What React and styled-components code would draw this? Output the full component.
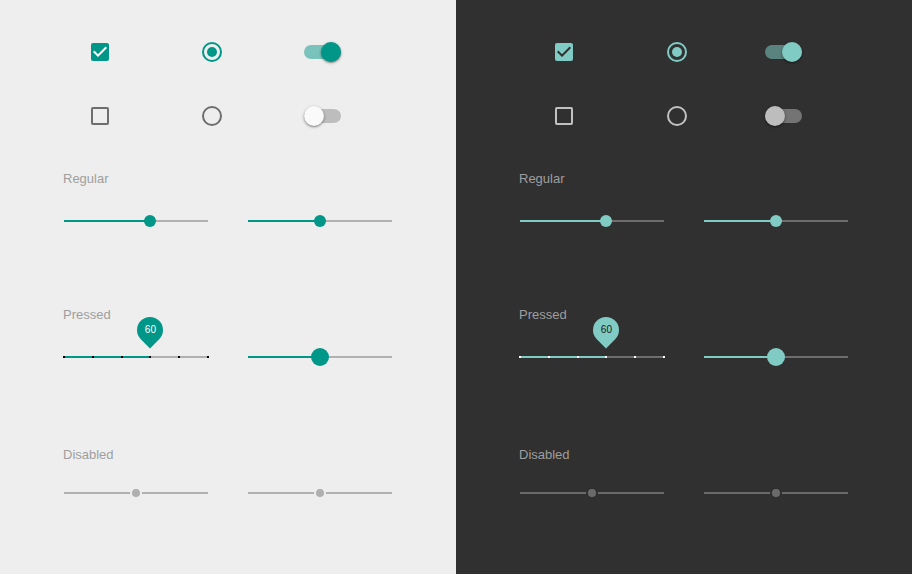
import React from 'react';
import styled, { createGlobalStyle } from 'styled-components';

const Global = createGlobalStyle`
  html, body { margin: 0; padding: 0; overflow: hidden; }
  body { font-family: "Liberation Sans", Arial, sans-serif; }
`;

const themes = {
  light: {
    bg: '#eeeeee', accent: '#009688', onAccent: '#ffffff', border: '#6e6e6e',
    label: '#9e9e9e', track: '#b0b0b0', tick: '#000000', switchOnTrack: '#7ac3bc',
    switchOffTrack: '#bdbdbd', switchOffThumb: '#fafafa', disabled: '#b0b0b0', pinText: '#ffffff',
  },
  dark: {
    bg: '#303030', accent: '#80cbc4', onAccent: '#303030', border: '#c1c1c1',
    label: '#9e9e9e', track: '#6e6e6e', tick: '#ffffff', switchOnTrack: '#5a837f',
    switchOffTrack: '#747474', switchOffThumb: '#bdbdbd', disabled: '#6a6a6a', pinText: '#1a1a1a',
  },
};

const Page = styled.div`
  display: flex;
  width: 912px;
  height: 574px;
`;

const Panel = styled.div`
  width: 456px;
  height: 574px;
  background: ${p => p.$t.bg};
  display: flex;
  flex-direction: column;
`;

const ControlGrid = styled.div`
  display: grid;
  grid-template-columns: ${p => p.$cols};
  grid-auto-rows: 20px;
  row-gap: 44px;
  align-items: center;
  padding: 42px 0 0 ${p => p.$pl}px;
`;

const CheckBox = styled.div`
  width: 18px;
  height: 18px;
  box-sizing: border-box;
  border-radius: 2px;
  display: flex;
  align-items: center;
  justify-content: center;
  background: ${p => (p.$on ? p.$t.accent : 'transparent')};
  border: ${p => (p.$on ? 'none' : `2px solid ${p.$t.border}`)};
  svg { display: block; }
`;

const Radio = styled.div`
  width: 20px;
  height: 20px;
  box-sizing: border-box;
  border-radius: 50%;
  border: 2px solid ${p => (p.$on ? p.$t.accent : p.$t.border)};
  display: flex;
  align-items: center;
  justify-content: center;
`;

const RadioDot = styled.div`
  width: 10px;
  height: 10px;
  border-radius: 50%;
  background: ${p => p.$t.accent};
`;

const SwitchBox = styled.div`
  position: relative;
  width: 37px;
  height: 20px;
`;

const SwitchTrack = styled.div`
  position: absolute;
  left: 0;
  right: 0;
  top: 3px;
  height: 14px;
  border-radius: 7px;
  background: ${p => (p.$on ? p.$t.switchOnTrack : p.$t.switchOffTrack)};
`;

const SwitchThumb = styled.div`
  position: absolute;
  top: 0;
  left: ${p => (p.$on ? 17 : 0)}px;
  width: 20px;
  height: 20px;
  border-radius: 50%;
  background: ${p => (p.$on ? p.$t.accent : p.$t.switchOffThumb)};
  box-shadow: 0 1px 3px rgba(0, 0, 0, 0.4), 0 1px 1px rgba(0, 0, 0, 0.14);
`;

const Section = styled.div`
  margin-top: ${p => p.$mt}px;
`;

const Label = styled.div`
  margin-left: 63px;
  margin-bottom: ${p => p.$mb}px;
  font-size: 13px;
  line-height: 16px;
  color: ${p => p.$t.label};
`;

const SliderRow = styled.div`
  display: flex;
  gap: 40px;
  padding-left: 64px;
`;

const SliderBox = styled.div`
  position: relative;
  width: 144px;
  height: 24px;
`;

const Track = styled.div`
  position: absolute;
  left: 0;
  right: 0;
  top: 11px;
  height: 2px;
  background: ${p => p.$c};
`;

const Fill = styled.div`
  position: absolute;
  left: 0;
  top: 11px;
  height: 2px;
  background: ${p => p.$c};
`;

const Tick = styled.div`
  position: absolute;
  top: 11px;
  width: 2px;
  height: 2px;
  margin-left: -1px;
  background: ${p => p.$c};
`;

const Thumb = styled.div`
  position: absolute;
  top: 12px;
  width: ${p => p.$size}px;
  height: ${p => p.$size}px;
  border-radius: 50%;
  background: ${p => p.$c};
  transform: translate(-50%, -50%);
  ${p => (p.$ring ? `box-shadow: 0 0 0 2px ${p.$ring};` : '')}
`;

const PinWrap = styled.div`
  position: absolute;
  top: -28.5px;
  width: 26px;
  height: 26px;
  margin-left: -13px;
  display: flex;
  align-items: center;
  justify-content: center;
`;

const PinShape = styled.div`
  position: absolute;
  inset: 0;
  border-radius: 50% 50% 50% 0;
  transform: rotate(-45deg);
  background: ${p => p.$c};
`;

const PinText = styled.span`
  position: relative;
  font-size: 10px;
  line-height: 10px;
  color: ${p => p.$c};
`;

function Check({ t, on }) {
  return (
    <CheckBox $t={t} $on={on}>
      {on && (
        <svg width="18" height="18" viewBox="3 3 18 18">
          <path d="M10 17l-5-5 1.41-1.41L10 14.17l7.59-7.59L19 8l-9 9z" fill={t.onAccent} />
        </svg>
      )}
    </CheckBox>
  );
}

function Switch({ t, on }) {
  return (
    <SwitchBox>
      <SwitchTrack $t={t} $on={on} />
      <SwitchThumb $t={t} $on={on} />
    </SwitchBox>
  );
}

function Slider({ t, value, mode }) {
  const pct = `${value * 100}%`;
  if (mode === 'disabled') {
    return (
      <SliderBox>
        <Track $c={t.disabled} />
        <Thumb $size={8} $c={t.disabled} $ring={t.bg} style={{ left: pct }} />
      </SliderBox>
    );
  }
  if (mode === 'discrete') {
    const ticks = [0, 0.2, 0.4, 0.6, 0.8, 1];
    return (
      <SliderBox>
        <Track $c={t.track} />
        <Fill $c={t.accent} style={{ width: pct }} />
        {ticks.map(v => (
          <Tick key={v} $c={t.tick} style={{ left: `${v * 100}%` }} />
        ))}
        <PinWrap style={{ left: pct }}>
          <PinShape $c={t.accent} />
          <PinText $c={t.pinText}>{Math.round(value * 100)}</PinText>
        </PinWrap>
      </SliderBox>
    );
  }
  return (
    <SliderBox>
      <Track $c={t.track} />
      <Fill $c={t.accent} style={{ width: pct }} />
      <Thumb $size={mode === 'pressed' ? 18 : 12} $c={t.accent} style={{ left: pct }} />
    </SliderBox>
  );
}

function ThemePanel({ t, cols, pl }) {
  return (
    <Panel $t={t}>
      <ControlGrid $cols={cols} $pl={pl}>
        <Check t={t} on />
        <Radio $t={t} $on><RadioDot $t={t} /></Radio>
        <Switch t={t} on />
        <Check t={t} on={false} />
        <Radio $t={t} $on={false} />
        <Switch t={t} on={false} />
      </ControlGrid>
      <Section $mt={45}>
        <Label $t={t} $mb={22}>Regular</Label>
        <SliderRow>
          <Slider t={t} value={0.6} mode="regular" />
          <Slider t={t} value={0.5} mode="regular" />
        </SliderRow>
      </Section>
      <Section $mt={74}>
        <Label $t={t} $mb={22}>Pressed</Label>
        <SliderRow>
          <Slider t={t} value={0.6} mode="discrete" />
          <Slider t={t} value={0.5} mode="pressed" />
        </SliderRow>
      </Section>
      <Section $mt={78}>
        <Label $t={t} $mb={18}>Disabled</Label>
        <SliderRow>
          <Slider t={t} value={0.5} mode="disabled" />
          <Slider t={t} value={0.5} mode="disabled" />
        </SliderRow>
      </Section>
    </Panel>
  );
}

export default function App() {
  return (
    <>
      <Global />
      <Page>
        <ThemePanel t={themes.light} cols="111px 102px auto" pl={91} />
        <ThemePanel t={themes.dark} cols="112px 98px auto" pl={99} />
      </Page>
    </>
  );
}
